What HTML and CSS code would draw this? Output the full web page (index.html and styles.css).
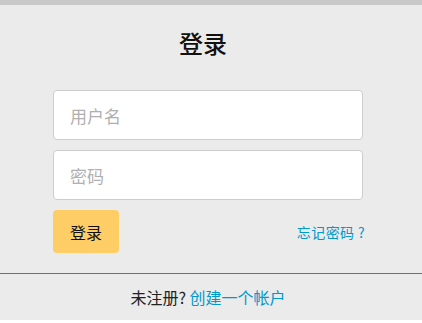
FILE: index.html
```html
<!DOCTYPE html>
<html lang="zh">
<head>
<meta charset="utf-8">
<title>登录</title>
<link rel="stylesheet" href="styles.css">
</head>
<body>
<div class="page">
  <div class="topbar"></div>
  <main class="login">
    <h1 class="title">登录</h1>
    <form class="form">
      <input class="field" type="text" placeholder="用户名">
      <input class="field" type="password" placeholder="密码">
      <div class="actions">
        <button class="btn" type="button">登录</button>
        <a class="forgot" href="#">忘记密码 ?</a>
      </div>
    </form>
  </main>
  <footer class="footer">未注册? <a class="create" href="#">创建一个帐户</a></footer>
</div>
</body>
</html>
```
FILE: styles.css
```css
html, body {
  margin: 0;
  padding: 0;
  background: #ffffff;
}
.page {
  height: 320px;
  background: #ebebeb;
  display: flex;
  flex-direction: column;
  font-family: "Noto Sans CJK SC", "Noto Sans", sans-serif;
  color: #222;
}
.topbar {
  height: 5px;
  background: #c8c8c8;
}
.login {
  padding: 0 59px 0 53px;
  flex: 1;
}
.title {
  margin: 0;
  padding: 23px 10px 0 0;
  height: 85px;
  box-sizing: border-box;
  font-size: 24px;
  line-height: 30px;
  font-weight: 500;
  text-align: center;
  color: #111;
}
.form {
  display: flex;
  flex-direction: column;
  gap: 10px;
}
.field {
  box-sizing: border-box;
  width: 310px;
  height: 50px;
  margin: 0;
  padding: 0 16px;
  border: 1px solid #cdcdcd;
  border-radius: 4px;
  background: #fff;
  font-family: inherit;
  font-size: 17px;
  outline: none;
}
.field::placeholder {
  color: #b0b0b0;
}
.actions {
  display: flex;
  justify-content: space-between;
  align-items: center;
}
.btn {
  width: 66px;
  height: 43px;
  border: none;
  border-radius: 4px;
  background: #ffcd66;
  color: #111;
  font-family: inherit;
  font-size: 16px;
  padding: 0;
}
.forgot {
  color: #0099cc;
  font-size: 14px;
  text-decoration: none;
  margin-right: -2px;
  letter-spacing: 0.4px;
}
.footer {
  height: 46px;
  border-top: 1px solid #707070;
  display: flex;
  align-items: center;
  justify-content: center;
  font-size: 16px;
  color: #222;
  white-space: pre;
  padding-right: 6px;
}
.create {
  color: #0099cc;
  text-decoration: none;
}
```
